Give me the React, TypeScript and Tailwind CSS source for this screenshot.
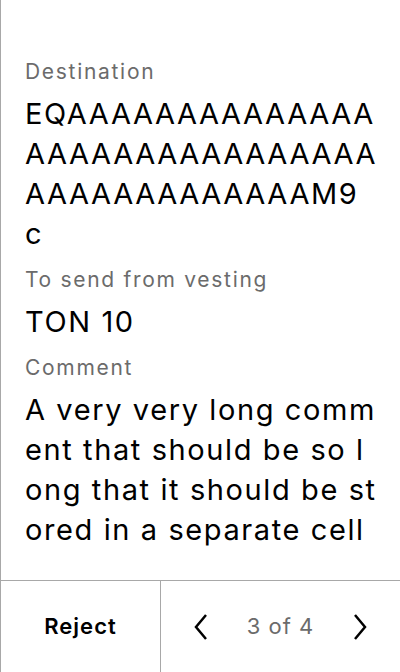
import React from 'react';

const font = { fontFamily: 'Inter, "Noto Sans", sans-serif' };

const Field: React.FC<{ label: string; children: React.ReactNode }> = ({ label, children }) => (
  <div className="flex flex-col">
    <div className="text-[21px] leading-[28px] tracking-[1.7px] text-[#6b6b6b]">{label}</div>
    <div className="mt-[8px] text-[29px] leading-[40px] tracking-[1.6px] text-black break-all">{children}</div>
  </div>
);

const App: React.FC = () => {
  return (
    <div className="w-[400px] h-[672px] bg-white flex flex-col border-l border-[#a8a8a8]" style={font}>
      <div className="flex-1 pl-6 pr-[20px] pt-[58px] flex flex-col gap-[12px]">
        <Field label="Destination">
          EQAAAAAAAAAAAAAAAAAAAAAAAAAAAAAAAAAAAAAAAAAAAM9
          <br />c
        </Field>
        <Field label="To send from vesting">TON 10</Field>
        <Field label="Comment">
          A very very long comment that should be so long that it should be stored in a separate cell
        </Field>
      </div>
      <div className="h-[92px] flex border-t border-[#a8a8a8]">
        <button className="w-[159px] flex items-center justify-center text-[22px] tracking-[1px] font-semibold text-black">
          Reject
        </button>
        <div className="flex-1 flex items-center justify-between border-l border-[#a8a8a8] px-[30px]">
          <svg width="20" height="28" viewBox="0 0 20 28" fill="none" stroke="black" strokeWidth="2.5">
            <path d="M15 2 L5 14 L15 26" />
          </svg>
          <span className="text-[22px] tracking-[1px] text-[#6b6b6b]">3 of 4</span>
          <svg width="20" height="28" viewBox="0 0 20 28" fill="none" stroke="black" strokeWidth="2.5">
            <path d="M5 2 L15 14 L5 26" />
          </svg>
        </div>
      </div>
    </div>
  );
};

export default App;
